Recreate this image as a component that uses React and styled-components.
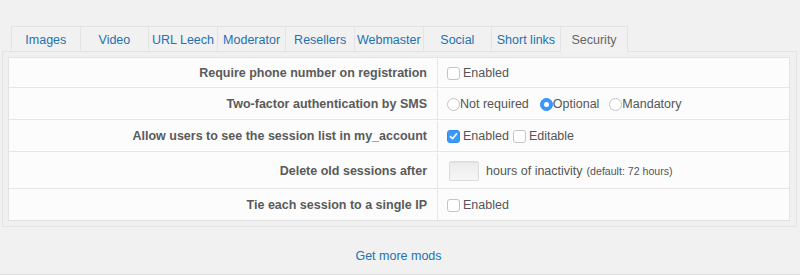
import React from 'react'
import styled, { createGlobalStyle } from 'styled-components'

const GlobalStyle = createGlobalStyle`
    body {
        margin: 0;
        background: #f1f1f1;
        font-family: "Liberation Sans", Arial, Helvetica, sans-serif;
        color: #555;
    }
`

const tabs = ['Images', 'Video', 'URL Leech', 'Moderator', 'Resellers', 'Webmaster', 'Social', 'Short links', 'Security']

function Check({ checked }) {
    return (
        <Box checked={checked}>
            {checked && (
                <svg width="9" height="9" viewBox="0 0 9 9">
                    <path d="M1.5 4.6 L3.6 6.7 L7.6 1.8" fill="none" stroke="#fff" strokeWidth="1.6" strokeLinecap="round" strokeLinejoin="round" />
                </svg>
            )}
        </Box>
    )
}

function App() {
    return (
        <Page>
            <GlobalStyle />
            <TabBar>
                {tabs.map((t) => (
                    <Tab key={t} active={t === 'Security'}>{t}</Tab>
                ))}
            </TabBar>
            <Panel>
                <Table>
                    <Row h={30}>
                        <Label>Require phone number on registration</Label>
                        <Value>
                            <Option><Check /><span>Enabled</span></Option>
                        </Value>
                    </Row>
                    <Row h={32}>
                        <Label>Two-factor authentication by SMS</Label>
                        <Value>
                            <Option gap={11}><Radio />Not required</Option>
                            <Option gap={10}><Radio checked />Optional</Option>
                            <Option><Radio />Mandatory</Option>
                        </Value>
                    </Row>
                    <Row h={32}>
                        <Label>Allow users to see the session list in my_account</Label>
                        <Value>
                            <Option gap={4}><Check checked /><span>Enabled</span></Option>
                            <Option><Check /><span>Editable</span></Option>
                        </Value>
                    </Row>
                    <Row h={37}>
                        <Label>Delete old sessions after</Label>
                        <Value>
                            <HoursInput type="text" />
                            <span>hours of inactivity</span>
                            <Hint>(default: 72 hours)</Hint>
                        </Value>
                    </Row>
                    <Row h={31} last>
                        <Label>Tie each session to a single IP</Label>
                        <Value>
                            <Option><Check /><span>Enabled</span></Option>
                        </Value>
                    </Row>
                </Table>
            </Panel>
            <Footer>
                <a href="#">Get more mods</a>
            </Footer>
        </Page>
    )
}

export default App

const Page = styled.div`
    height: 275px;
    box-sizing: border-box;
    padding-top: 26px;
    font-size: 12.5px;
`

const TabBar = styled.div`
    display: flex;
    margin-left: 11px;
    position: relative;
    z-index: 1;
`

const Tab = styled.a`
    box-sizing: border-box;
    width: 68.6px;
    height: 26px;
    padding-top: 1px;
    display: flex;
    align-items: center;
    justify-content: center;
    border: 1px solid #e3e3e3;
    border-right: none;
    border-bottom: ${props => props.active ? '1px solid #f1f1f1' : '1px solid #e3e3e3'};
    background: #f1f1f1;
    color: ${props => props.active ? '#666' : '#2271b1'};
    text-decoration: none;
    white-space: nowrap;
    cursor: pointer;

    &:last-child {
        border-right: 1px solid #e3e3e3;
    }
`

const Panel = styled.div`
    margin: -1px 3px 0 2px;
    border: 1px solid #e3e3e3;
    background: #f0f0f0;
    padding: 5px 6px 5px 5px;
`

const Table = styled.div`
    border: 1px solid #e3e3e3;
    background: #fcfcfc;
`

const Row = styled.div`
    display: flex;
    height: ${props => props.h}px;
    padding-top: 1px;
    border-bottom: ${props => props.last ? 'none' : '1px solid #e6e6e6'};
    box-sizing: border-box;
`

const Label = styled.div`
    width: 429px;
    box-sizing: border-box;
    padding-right: 10px;
    border-right: 1px solid #e6e6e6;
    display: flex;
    align-items: center;
    justify-content: flex-end;
    font-weight: bold;
    color: #5a5a5a;
`

const Value = styled.div`
    flex: 1;
    display: flex;
    align-items: center;
    padding-left: 9px;
    color: #555;
`

const Option = styled.label`
    display: flex;
    align-items: center;
    margin-right: ${props => props.gap || 0}px;
`

const Box = styled.span`
    width: 13px;
    height: 13px;
    box-sizing: border-box;
    border-radius: 3px;
    margin-right: 3px;
    display: inline-flex;
    align-items: center;
    justify-content: center;
    background: ${props => props.checked ? '#3b99fc' : '#fff'};
    border: 1px solid ${props => props.checked ? '#2f8cf0' : '#c4c4c4'};
`

const Radio = styled.span`
    width: 13px;
    height: 13px;
    box-sizing: border-box;
    border-radius: 50%;
    position: relative;
    background: ${props => props.checked ? '#3b99fc' : '#fff'};
    border: 1px solid ${props => props.checked ? '#2f8cf0' : '#c4c4c4'};

    &::after {
        content: '';
        display: ${props => props.checked ? 'block' : 'none'};
        position: absolute;
        width: 5px;
        height: 5px;
        left: 3px;
        top: 3px;
        border-radius: 50%;
        background: #fff;
    }
`

const HoursInput = styled.input`
    width: 30px;
    height: 20px;
    box-sizing: border-box;
    margin: 0 7px 0 2px;
    border: 1px solid #dcdcdc;
    border-radius: 2px;
    background: linear-gradient(#ececec, #f6f6f6);
    box-shadow: inset 0 1px 1px rgba(0, 0, 0, .05);
    outline: none;
`

const Hint = styled.span`
    font-size: 10.6px;
    margin-left: 4px;
    color: #555;
`

const Footer = styled.div`
    display: flex;
    justify-content: center;
    margin-top: 22px;
    padding: 0 0 11px 0;
    border-bottom: 1px solid #dcdcdc;

    a {
        color: #2271b1;
        text-decoration: none;
        font-size: 12.5px;
        margin-left: -3px;
    }
`
